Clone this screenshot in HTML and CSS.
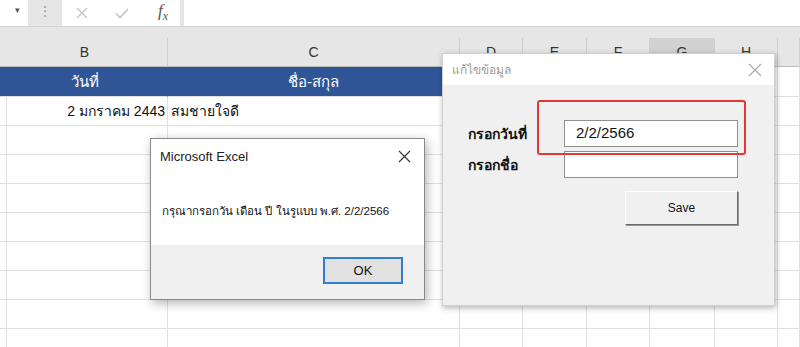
FILE: index.html
```html
<!DOCTYPE html>
<html lang="th">

<head>
  <meta charset="UTF-8">
  <meta name="viewport" content="width=device-width, initial-scale=1.0">
  <title>แก้ไขข้อมูล</title>
  <link rel="stylesheet" href="styles.css">
</head>

<body>
  <div class="formula-bar">
    <div class="name-box">&#9662;</div>
    <div class="grip">&#8942;</div>
    <div class="fx-buttons">
      <svg class="fx-icon" width="14" height="14" viewBox="0 0 14 14">
        <path d="M2 2 L12 12 M12 2 L2 12" stroke="#c4c4c4" stroke-width="1.4" fill="none" />
      </svg>
      <svg class="fx-icon" width="16" height="14" viewBox="0 0 16 14">
        <path d="M2 7.5 L6 11.5 L14 3" stroke="#c4c4c4" stroke-width="1.6" fill="none" />
      </svg>
      <span class="fx-label">f<sub>x</sub></span>
    </div>
    <div class="bar-gap"></div>
    <div class="formula-input"></div>
  </div>

  <div class="sheet">
    <div class="header-band"></div>
    <div class="grid-row col-headers">
      <div class="cell"></div>
      <div class="cell">B</div>
      <div class="cell">C</div>
      <div class="cell">D</div>
      <div class="cell">E</div>
      <div class="cell">F</div>
      <div class="cell selected">G</div>
      <div class="cell">H</div>
      <div class="cell"></div>
    </div>
    <div class="grid-row title-row">
      <div class="cell"></div>
      <div class="cell">วันที่</div>
      <div class="cell">ชื่อ-สกุล</div>
      <div class="cell plain"></div>
      <div class="cell plain"></div>
      <div class="cell plain"></div>
      <div class="cell plain"></div>
      <div class="cell plain"></div>
      <div class="cell plain"></div>
    </div>
    <div class="grid-row data-row">
      <div class="cell"></div>
      <div class="cell right">2 มกราคม 2443</div>
      <div class="cell">สมชายใจดี</div>
      <div class="cell"></div>
      <div class="cell"></div>
      <div class="cell"></div>
      <div class="cell"></div>
      <div class="cell"></div>
      <div class="cell"></div>
    </div>
    <div id="empty-rows"></div>
  </div>

  <!-- Excel message box -->
  <div class="msgbox">
    <div class="msgbox-body">
      <div class="msgbox-title">
        <span>Microsoft Excel</span>
        <svg width="13" height="13" viewBox="0 0 13 13">
          <path d="M1 1 L12 12 M12 1 L1 12" stroke="#333" stroke-width="1.1" fill="none" />
        </svg>
      </div>
      <p class="msgbox-text">กรุณากรอกวัน เดือน ปี ในรูแบบ พ.ศ. 2/2/2566</p>
    </div>
    <div class="msgbox-footer">
      <button class="ok-button">OK</button>
    </div>
  </div>

  <!-- UserForm -->
  <div class="userform">
    <div class="userform-title">
      <span>แก้ไขข้อมูล</span>
      <svg width="14" height="14" viewBox="0 0 14 14">
        <path d="M1 1 L13 13 M13 1 L1 13" stroke="#a8a8a8" stroke-width="1.1" fill="none" />
      </svg>
    </div>
    <div class="userform-body">
      <div class="field-grid">
        <label class="field-label">กรอกวันที่</label>
        <div class="field-input">2/2/2566</div>
        <label class="field-label">กรอกชื่อ</label>
        <div class="field-input"></div>
      </div>
      <div class="save-row">
        <button class="save-button">Save</button>
      </div>
      <div class="highlight"></div>
    </div>
  </div>

  <script>
    // fill the rest of the sheet with empty rows
    let rowsHtml = "";
    for (let i = 0; i < 8; i++) {
      rowsHtml += '<div class="grid-row data-row">';
      for (let c = 0; c < 9; c++) {
        rowsHtml += '<div class="cell"></div>';
      }
      rowsHtml += '</div>';
    }
    document.getElementById("empty-rows").innerHTML = rowsHtml;
  </script>
</body>

</html>
```

FILE: styles.css
```css
* {
  box-sizing: border-box;
}

body {
  width: 800px;
  height: 347px;
  margin: 0;
  padding: 0;
  overflow: hidden;
  background-color: #ffffff;
  font-family: "Liberation Sans", "Noto Sans", sans-serif;
  position: relative;
}

/* formula bar */
.formula-bar {
  height: 27px;
  display: flex;
  border-bottom: 1px solid #d4d4d4;
}

.name-box {
  width: 28px;
  background-color: #ffffff;
  color: #555;
  font-size: 9px;
  padding: 5px 0 0 15px;
}

.grip {
  width: 34px;
  background-color: #e6e6e6;
  color: #a0a0a0;
  font-size: 14px;
  text-align: center;
  padding-top: 3px;
}

.fx-buttons {
  width: 118px;
  background-color: #ffffff;
  display: flex;
  align-items: center;
  padding-left: 13px;
  gap: 25px;
}

.fx-label {
  font-family: "Liberation Serif", serif;
  font-style: italic;
  font-size: 17px;
  color: #555;
  margin-left: 3px;
}

.fx-label sub {
  font-size: 12px;
}

.bar-gap {
  width: 4px;
  background-color: #e6e6e6;
}

.formula-input {
  flex: 1;
  background-color: #ffffff;
}

/* sheet */
.header-band {
  height: 11px;
  background-color: #e6e6e6;
}

.grid-row {
  display: grid;
  grid-template-columns: 2px 166px 292px 63px 64px 63px 65px 63px 1fr;
  height: 29px;
}

.cell {
  border-right: 1px solid #e1e1e1;
  border-bottom: 1px solid #e1e1e1;
  font-size: 14px;
  color: #111;
  display: flex;
  align-items: center;
  padding: 0 3px;
  white-space: nowrap;
}

.col-headers .cell {
  background-color: #e6e6e6;
  border-right-color: #cfcfcf;
  border-bottom-color: #bdbdbd;
  justify-content: center;
  font-size: 14px;
  color: #333;
}

.col-headers .cell.selected {
  background-color: #d2d2d2;
}

.title-row {
  height: 30px;
}

.title-row .cell {
  background-color: #2f5597;
  border-right-color: #2f5597;
  color: #ffffff;
  justify-content: center;
  font-size: 15px;
}

.title-row .cell.plain {
  background-color: #ffffff;
  border-right-color: #e1e1e1;
}

.cell.right {
  justify-content: flex-end;
  padding-right: 2px;
}

/* message box */
.msgbox {
  position: absolute;
  left: 150px;
  top: 138px;
  width: 275px;
  height: 162px;
  border: 1px solid #8a8a8a;
  background-color: #f0f0f0;
  box-shadow: 2px 3px 10px rgba(0, 0, 0, 0.3);
  display: flex;
  flex-direction: column;
  font-family: "Liberation Sans", "Noto Sans", sans-serif;
}

.msgbox-body {
  height: 106px;
  background-color: #ffffff;
}

.msgbox-title {
  display: flex;
  justify-content: space-between;
  align-items: center;
  padding: 10px 13px 0 9px;
  font-size: 13px;
  color: #222;
}

.msgbox-text {
  margin: 0;
  padding: 38px 0 0 11px;
  font-size: 11.5px;
  color: #111;
}

.msgbox-footer {
  flex: 1;
  display: flex;
  justify-content: flex-end;
  padding: 12px 21px 0 0;
}

.ok-button {
  width: 80px;
  height: 27px;
  background-color: #e1e1e1;
  border: 2px solid #2f7fd0;
  font-family: "Liberation Sans", sans-serif;
  font-size: 13px;
  color: #111;
}

/* user form */
.userform {
  position: absolute;
  left: 442px;
  top: 53px;
  width: 333px;
  height: 253px;
  background-color: #f0f0f0;
  border: 1px solid #d0d0d0;
  box-shadow: 1px 2px 6px rgba(0, 0, 0, 0.3);
}

.userform-title {
  height: 31px;
  background-color: #ffffff;
  display: flex;
  justify-content: space-between;
  align-items: center;
  padding: 0 12px 0 9px;
  font-size: 12px;
  color: #9a9a9a;
}

.userform-body {
  position: relative;
  padding: 35px 36px 0 25px;
}

.field-grid {
  display: grid;
  grid-template-columns: 96px 174px;
  row-gap: 4px;
}

.field-label {
  font-size: 14px;
  font-weight: bold;
  color: #111;
  display: flex;
  align-items: center;
}

.field-input {
  height: 27px;
  background-color: #ffffff;
  border: 1px solid #8f8f8f;
  font-size: 15px;
  color: #111;
  padding: 3px 0 0 11px;
}

.save-row {
  display: flex;
  justify-content: flex-end;
  margin-top: 13px;
}

.save-button {
  width: 113px;
  height: 34px;
  background-color: #f0f0f0;
  border: 1px solid;
  border-color: #ffffff #6a6a6a #6a6a6a #ffffff;
  box-shadow: 1px 1px 0 #9a9a9a;
  font-family: "Liberation Sans", sans-serif;
  font-size: 12px;
  color: #111;
}

.highlight {
  position: absolute;
  left: 94px;
  top: 15px;
  width: 209px;
  height: 55px;
  border: 2px solid #e2383b;
  border-radius: 3px;
}
```
